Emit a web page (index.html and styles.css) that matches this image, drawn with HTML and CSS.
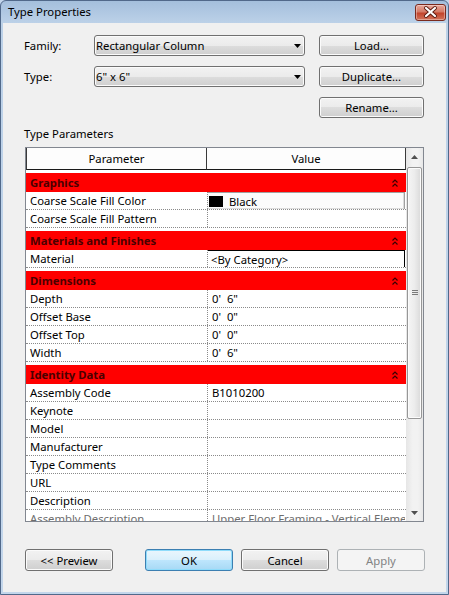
FILE: index.html
```html
<!DOCTYPE html>
<html>
<head>
<meta charset="utf-8">
<link rel="stylesheet" href="styles.css">
</head>
<body>
<div class="window">
  <div class="titlebar">
    <span class="title">Type Properties</span>
    <div class="close">
      <svg width="31" height="17" viewBox="0 0 31 17">
        <path d="M11 4 L20 12 M20 4 L11 12" stroke="#5a1a10" stroke-width="4" stroke-linecap="round" fill="none"/>
        <path d="M11 4 L20 12 M20 4 L11 12" stroke="#ffffff" stroke-width="2.2" stroke-linecap="round" fill="none"/>
      </svg>
    </div>
  </div>
  <div class="client">
    <div class="field-row first">
      <span class="lbl">Family:</span>
      <div class="combo"><span>Rectangular Column</span><svg class="arrow" width="7" height="4" viewBox="0 0 7 4"><path d="M0 0 H7 L3.5 4 Z" fill="#000"/></svg></div>
      <div class="btn side">Load...</div>
    </div>
    <div class="field-row">
      <span class="lbl">Type:</span>
      <div class="combo"><span>6" x 6"</span><svg class="arrow" width="7" height="4" viewBox="0 0 7 4"><path d="M0 0 H7 L3.5 4 Z" fill="#000"/></svg></div>
      <div class="btn side">Duplicate...</div>
    </div>
    <div class="field-row">
      <span class="lbl"></span>
      <div class="combo-space"></div>
      <div class="btn side">Rename...</div>
    </div>
    <div class="section-label">Type Parameters</div>
    <div class="grid">
      <div class="table">
        <div class="thead">
          <div class="th p">Parameter</div>
          <div class="th v">Value</div>
        </div>
        <div class="group">
          <div class="ghead"><span>Graphics</span><svg class="chev" width="6" height="8" viewBox="0 0 6 8"><path d="M0.5 3.5 L3 1 L5.5 3.5 M0.5 7.5 L3 5 L5.5 7.5" stroke="#3a0000" stroke-width="1.2" fill="none"/></svg></div>
          <div class="row"><div class="c p">Coarse Scale Fill Color</div><div class="c v"><div class="colorbox"><span class="swatch"></span><span>Black</span></div></div></div>
          <div class="row"><div class="c p">Coarse Scale Fill Pattern</div><div class="c v"></div></div>
        </div>
        <div class="group">
          <div class="ghead"><span>Materials and Finishes</span><svg class="chev" width="6" height="8" viewBox="0 0 6 8"><path d="M0.5 3.5 L3 1 L5.5 3.5 M0.5 7.5 L3 5 L5.5 7.5" stroke="#3a0000" stroke-width="1.2" fill="none"/></svg></div>
          <div class="row"><div class="c p">Material</div><div class="c v"><div class="editbox">&lt;By Category&gt;</div></div></div>
        </div>
        <div class="group">
          <div class="ghead"><span>Dimensions</span><svg class="chev" width="6" height="8" viewBox="0 0 6 8"><path d="M0.5 3.5 L3 1 L5.5 3.5 M0.5 7.5 L3 5 L5.5 7.5" stroke="#3a0000" stroke-width="1.2" fill="none"/></svg></div>
          <div class="row"><div class="c p">Depth</div><div class="c v">0'&nbsp; 6"</div></div>
          <div class="row"><div class="c p">Offset Base</div><div class="c v">0'&nbsp; 0"</div></div>
          <div class="row"><div class="c p">Offset Top</div><div class="c v">0'&nbsp; 0"</div></div>
          <div class="row"><div class="c p">Width</div><div class="c v">0'&nbsp; 6"</div></div>
        </div>
        <div class="group">
          <div class="ghead"><span>Identity Data</span><svg class="chev" width="6" height="8" viewBox="0 0 6 8"><path d="M0.5 3.5 L3 1 L5.5 3.5 M0.5 7.5 L3 5 L5.5 7.5" stroke="#3a0000" stroke-width="1.2" fill="none"/></svg></div>
          <div class="row"><div class="c p">Assembly Code</div><div class="c v">B1010200</div></div>
          <div class="row"><div class="c p">Keynote</div><div class="c v"></div></div>
          <div class="row"><div class="c p">Model</div><div class="c v"></div></div>
          <div class="row"><div class="c p">Manufacturer</div><div class="c v"></div></div>
          <div class="row"><div class="c p">Type Comments</div><div class="c v"></div></div>
          <div class="row"><div class="c p">URL</div><div class="c v"></div></div>
          <div class="row"><div class="c p">Description</div><div class="c v"></div></div>
          <div class="row muted"><div class="c p">Assembly Description</div><div class="c v">Upper Floor Framing - Vertical Elements</div></div>
        </div>
      </div>
      <div class="scrollbar">
        <div class="sb-btn"><svg width="7" height="4" viewBox="0 0 7 4"><path d="M0 4 H7 L3.5 0 Z" fill="#505050"/></svg></div>
        <div class="sb-track">
          <div class="thumb"><svg width="6" height="6" viewBox="0 0 6 6"><path d="M0 0.5 H6 M0 2.5 H6 M0 4.5 H6" stroke="#7a7a7a" stroke-width="1"/></svg></div>
        </div>
        <div class="sb-btn"><svg width="7" height="4" viewBox="0 0 7 4"><path d="M0 0 H7 L3.5 4 Z" fill="#505050"/></svg></div>
      </div>
    </div>
    <div class="footer">
      <div class="btn foot">&lt;&lt; Preview</div>
      <div class="btn foot ok">OK</div>
      <div class="btn foot cancel">Cancel</div>
      <div class="btn foot apply disabled">Apply</div>
    </div>
  </div>
</div>
</body>
</html>
```

FILE: styles.css
```css
* { box-sizing: border-box; }
html, body { margin: 0; padding: 0; }
body {
  width: 449px;
  height: 595px;
  overflow: hidden;
  font-family: "Noto Sans", "Open Sans", sans-serif;
  font-size: 11.3px;
  color: #000;
  background: #c3d6eb;
}
.window {
  width: 449px;
  height: 595px;
  border: 1px solid #51698a;
  border-radius: 6px 6px 0 0;
  background: linear-gradient(to bottom, #a4bfdc 0px, #bcd1e8 22px, #c3d6eb 100%);
  display: flex;
  flex-direction: column;
}
.titlebar {
  height: 22px;
  flex: none;
  position: relative;
}
.title {
  display: block;
  padding-left: 7px;
  line-height: 21px;
  font-size: 11.3px;
  color: #000;
}
.close {
  position: absolute;
  top: 3px;
  right: 2px;
  width: 31px;
  height: 17px;
  border: 1px solid #7a2a1e;
  border-radius: 3px;
  background: linear-gradient(to bottom, #e8a89c 0%, #d47a66 45%, #c2442c 55%, #d2745c 100%);
  box-shadow: inset 0 0 0 1px rgba(255,255,255,0.35);
}
.close svg { position: absolute; left: -1px; top: -1px; }
.client {
  flex: none;
  height: 569px;
  margin: 0 2px;
  background: #f0f0f0;
  display: flex;
  flex-direction: column;
}
.field-row {
  display: flex;
  align-items: center;
  height: 21px;
  margin-top: 10px;
  padding-left: 21px;
}
.field-row.first { margin-top: 12px; }
.lbl { width: 70px; flex: none; }
.combo, .combo-space { width: 211px; height: 21px; flex: none; margin-right: 14px; }
.combo {
  border: 1px solid #707070;
  border-radius: 3px;
  background: linear-gradient(to bottom, #f2f2f2 0%, #ebebeb 50%, #dddddd 50%, #cfcfcf 100%);
  box-shadow: inset 0 0 0 1px #fbfbfb;
  display: flex;
  align-items: center;
  justify-content: space-between;
  padding: 0 3px 0 1px;
}
.btn {
  height: 21px;
  border: 1px solid #707070;
  border-radius: 3px;
  background: linear-gradient(to bottom, #f2f2f2 0%, #ebebeb 50%, #dddddd 50%, #cfcfcf 100%);
  box-shadow: inset 0 0 0 1px #fbfbfb;
  display: flex;
  align-items: center;
  justify-content: center;
  flex: none;
}
.side { width: 105px; }
.section-label {
  margin-top: 8px;
  padding-left: 21px;
  height: 16px;
  line-height: 16px;
}
.grid {
  margin-top: 5px;
  margin-left: 22px;
  width: 399px;
  height: 375px;
  border: 1px solid #828790;
  display: flex;
  background: #fff;
  flex: none;
}
.table {
  width: 380px;
  flex: none;
  overflow: hidden;
  background: #fff;
}
.thead {
  display: flex;
  height: 22px;
}
.th {
  height: 22px;
  border-bottom: 1px solid #1a1a1a;
  display: flex;
  align-items: center;
  justify-content: center;
  background: #fdfdfd;
}
.th.p { width: 181px; border-left: 1px solid #3a3a3a; border-right: 1px solid #3a3a3a; }
.th.v { width: 199px; border-right: 1px solid #3a3a3a; }
.group { margin-top: 3px; }
.ghead {
  height: 19px;
  background: #ff0000;
  color: #4a0000;
  font-weight: bold;
  display: flex;
  align-items: center;
  justify-content: space-between;
  padding: 0 8px 1px 4px;
}
.chev { margin-top: 1px; }
.row {
  display: flex;
  height: 18px;
  border-bottom: 1px dotted #8a8a8a;
}
.c {
  height: 17px;
  display: flex;
  align-items: center;
  white-space: nowrap;
  overflow: hidden;
  padding-bottom: 1px;
}
.c.p { width: 181px; padding-left: 4px; }
.c.v { width: 198px; padding-left: 4px; border-left: 1px dotted #8a8a8a; }
.row.muted .c { color: #6d6d6d; }
.colorbox {
  margin-left: -5px;
  width: 198px;
  height: 18px;
  margin-top: 0;
  border: 1px solid #a0a0a0;
  box-shadow: inset -1px -1px 0 #dcdcdc;
  background: #fbfbfb;
  display: flex;
  align-items: center;
  padding-left: 1px;
  align-self: flex-start;
}
.swatch {
  width: 14px;
  height: 11px;
  background: #000;
  margin-right: 6px;
}
.editbox {
  margin-left: -5px;
  width: 198px;
  height: 18px;
  border: 1px solid #000;
  background: #fff;
  display: flex;
  align-items: center;
  padding-left: 3px;
  align-self: flex-start;
}
.scrollbar {
  width: 17px;
  flex: none;
  display: flex;
  flex-direction: column;
  background: linear-gradient(to right, #e6e6e6, #f2f2f2 40%, #f2f2f2 70%, #e8e8e8);
}
.sb-btn {
  height: 17px;
  flex: none;
  display: flex;
  align-items: center;
  justify-content: center;
}
.sb-track { flex: 1; padding: 1px 0; }
.thumb {
  margin: 1px 0 0 1px;
  width: 15px;
  height: 252px;
  border: 1px solid #979797;
  border-radius: 2px;
  background: linear-gradient(to right, #f5f5f5 0%, #ececec 50%, #d9d9d9 100%);
  box-shadow: inset 0 0 0 1px #fbfbfb;
  display: flex;
  align-items: center;
  justify-content: center;
}
.footer {
  display: flex;
  margin-top: 27px;
  padding-left: 22px;
}
.foot { width: 88px; height: 22px; }
.ok {
  margin-left: 32px;
  border-color: #3c7fb1;
  background: linear-gradient(to bottom, #eaf6fd 0%, #d9f0fc 50%, #bee6fd 50%, #a7d9f5 100%);
  box-shadow: inset 0 0 0 1px #8fdcfb;
}
.cancel { margin-left: 8px; }
.apply { margin-left: 8px; }
.disabled {
  border-color: #adb2b5;
  background: #f4f4f4;
  box-shadow: none;
  color: #838383;
}
```
